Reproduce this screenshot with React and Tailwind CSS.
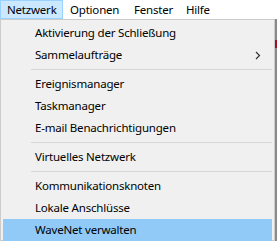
import React from "react";

const font = { fontFamily: '"Noto Sans", "Open Sans", sans-serif' };

function Item({ label, highlight, submenu }) {
  return (
    <div
      className={`h-[22px] flex items-center pl-[32px] pr-[8px] mx-[2px] ${
        highlight ? "bg-[#91c9f7]" : ""
      }`}
    >
      <span className="flex-1 text-[11.5px] tracking-[-0.2px] text-black leading-none">{label}</span>
      {submenu && (
        <svg width="6" height="9" viewBox="0 0 6 9" className="mr-[3px]">
          <path d="M1 1 L4.5 4.5 L1 8" fill="none" stroke="#333" strokeWidth="1.2" />
        </svg>
      )}
    </div>
  );
}

function Sep() {
  return (
    <div className="h-[7px] flex items-center pl-[30px] pr-[2px]">
      <div className="h-px w-full bg-[#d7d7d7]" />
    </div>
  );
}

export default function App() {
  return (
    <div className="w-[277px] h-[241px] overflow-hidden bg-white" style={font}>
      <div className="h-[19px] flex items-stretch bg-white text-[11.5px] tracking-[-0.2px] text-black">
        <div className="pl-[6px] flex items-center bg-[#cce8ff] border border-[#99d1ff] w-[63px]">Netzwerk</div>
        <div className="pl-[7px] flex items-center w-[64px]">Optionen</div>
        <div className="pl-[7px] flex items-center w-[52px]">Fenster</div>
        <div className="pl-[7px] flex items-center">Hilfe</div>
      </div>
      <div className="flex h-[222px]">
        <div className="w-[275px] border border-[#cccccc] bg-[#f0f0f0] pt-[2px]">
          <Item label="Aktivierung der Schließung" />
          <Item label="Sammelaufträge" submenu />
          <Sep />
          <Item label="Ereignismanager" />
          <Item label="Taskmanager" />
          <Item label="E-mail Benachrichtigungen" />
          <Sep />
          <Item label="Virtuelles Netzwerk" />
          <Sep />
          <Item label="Kommunikationsknoten" />
          <Item label="Lokale Anschlüsse" />
          <Item label="WaveNet verwalten" highlight />
        </div>
        <div className="w-[2px] flex flex-col bg-[#8a8a8a]">
          <div className="h-[21px]" />
          <div className="h-[8px] bg-[#a01020]" />
        </div>
      </div>
    </div>
  );
}
